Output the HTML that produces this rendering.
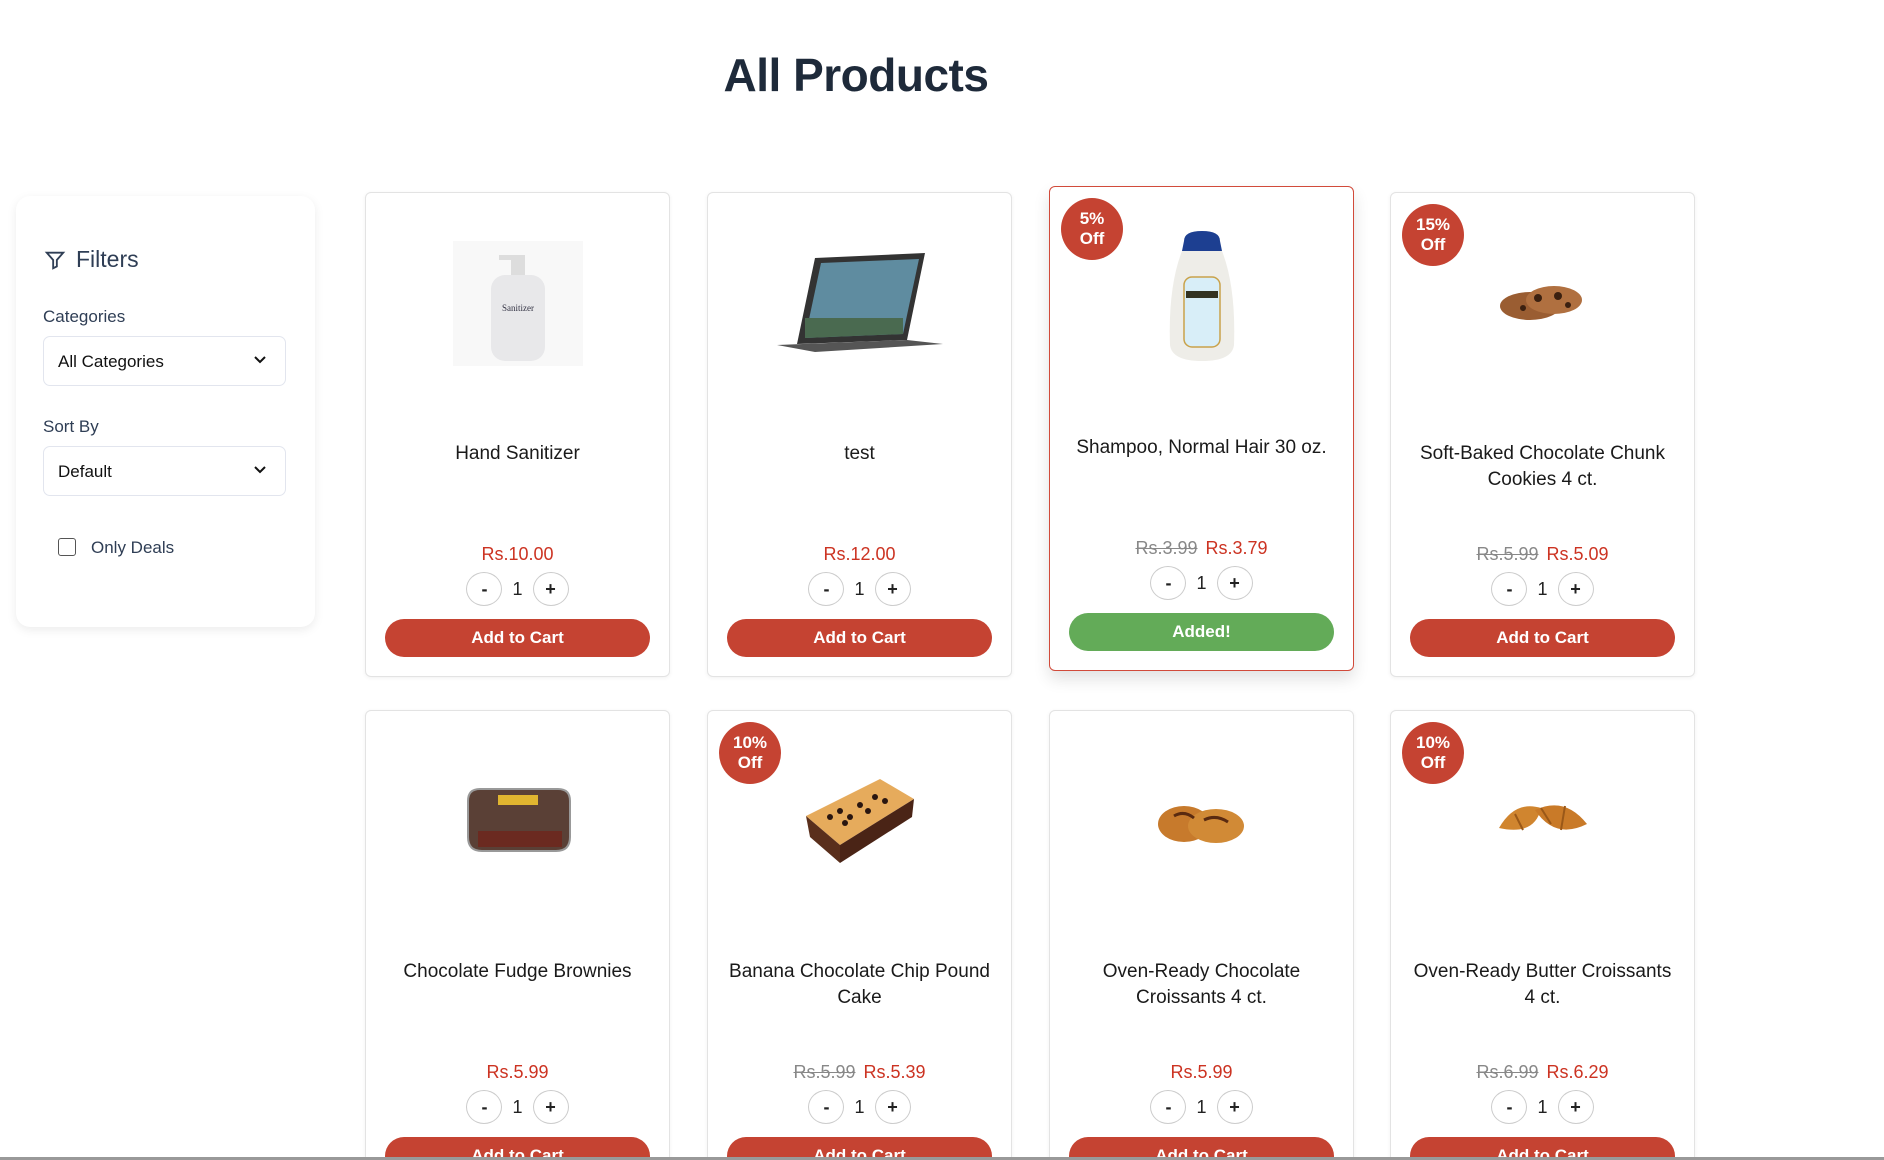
<!DOCTYPE html>
<html style="height:1160px;overflow:hidden"><head><meta charset="utf-8"><style>
*{box-sizing:border-box;margin:0;padding:0}
body{width:1884px;height:1160px;background:#fff;font-family:"Liberation Sans",sans-serif;position:relative;overflow:hidden;color:#222}
.wrap{position:absolute;left:0;top:0;width:1884px;height:1157px;overflow:hidden}
h1{position:absolute;left:0;width:1712px;text-align:center;top:48px;font-size:46px;font-weight:bold;color:#1e2a3a;letter-spacing:-0.5px}
.side{position:absolute;left:16px;top:196px;width:299px;height:431px;background:#fff;border-radius:14px;box-shadow:0 3px 10px rgba(0,0,0,.08)}
.side .fh{position:absolute;left:28px;top:50px;font-size:23px;color:#2f3e55;display:flex;align-items:center;gap:10px}
.lbl{position:absolute;left:27px;font-size:17px;color:#2f3e55}
.sel{position:absolute;left:27px;width:243px;height:50px;border:1px solid #e2e5ee;border-radius:7px;font-size:17px;color:#111;padding:15px 14px}
.sel svg{position:absolute;right:18px;top:18px}
.chk{position:absolute;left:42px;top:342px;width:18px;height:18px;border:1.5px solid #555;border-radius:3px}
.od{position:absolute;left:75px;top:342px;font-size:17px;color:#2f3e55}
.card{position:absolute;width:305px;height:485px;border:1px solid #e3e3e3;border-radius:6px;background:#fff;box-shadow:0 1px 4px rgba(0,0,0,.06)}
.card.hl{border-color:#d14a3a;box-shadow:0 8px 16px rgba(0,0,0,.12)}
.img{position:absolute;left:0;right:0;top:40px;height:140px;display:flex;justify-content:center;align-items:center}
.t{position:absolute;left:20px;right:20px;top:248px;text-align:center;font-size:19px;line-height:26px;color:#1a1a1a}
.p{position:absolute;left:0;right:0;top:351px;text-align:center;font-size:18px;color:#cc3322}
.p s{color:#888;margin-right:8px}
.q{position:absolute;left:0;right:0;top:379px;display:flex;justify-content:center;align-items:center;gap:10px;font-size:18px;color:#222}
.q span.b{width:36px;height:34px;border:1px solid #ccc;border-radius:50%;display:flex;justify-content:center;align-items:center;font-weight:bold;font-size:18px}
.btn{position:absolute;left:19px;right:19px;top:426px;height:38px;border-radius:19px;background:#c54332;color:#fff;font-weight:bold;font-size:17px;text-align:center;line-height:38px}
.btn.g{background:#63ab58}
.bd{position:absolute;left:11px;top:11px;width:62px;height:62px;border-radius:50%;background:#c54332;color:#fff;font-weight:bold;font-size:17px;line-height:20px;text-align:center;padding-top:11px}
.line{position:absolute;left:0;width:1884px;top:1157px;height:3px;background:#999}
</style></head><body>
<div class="wrap">
<h1>All Products</h1>
<div class="side">
 <div class="fh"><svg width="22" height="22" viewBox="0 0 24 24" fill="none" stroke="#2f3e55" stroke-width="2"><path d="M3 4h18l-7 8v7l-4 2v-9z"/></svg>Filters</div>
 <div class="lbl" style="top:111px">Categories</div>
 <div class="sel" style="top:140px">All Categories<svg width="14" height="10" viewBox="0 0 14 10"><path d="M2 2l5 5 5-5" stroke="#111" stroke-width="2" fill="none"/></svg></div>
 <div class="lbl" style="top:221px">Sort By</div>
 <div class="sel" style="top:250px">Default<svg width="14" height="10" viewBox="0 0 14 10"><path d="M2 2l5 5 5-5" stroke="#111" stroke-width="2" fill="none"/></svg></div>
 <div class="chk"></div><div class="od">Only Deals</div>
</div>

<div class="card" style="left:365px;top:192px">
 <div class="img"><svg width="130" height="125" viewBox="0 0 130 125"><rect x="0" y="0" width="130" height="125" fill="#f8f8f8"/><rect x="58" y="14" width="14" height="20" fill="#ddd"/><rect x="46" y="14" width="20" height="5" fill="#ddd"/><rect x="38" y="34" width="54" height="86" rx="14" fill="#e8e8ea"/><text x="65" y="70" font-size="9" fill="#334" text-anchor="middle" font-family="Liberation Serif">Sanitizer</text></svg></div>
 <div class="t">Hand Sanitizer</div><div class="p">Rs.10.00</div>
 <div class="q"><span class="b">-</span>1<span class="b">+</span></div><div class="btn">Add to Cart</div>
</div>
<div class="card" style="left:707px;top:192px">
 <div class="img"><svg width="170" height="110" viewBox="0 0 170 110"><path d="M40 10L150 5L132 92L22 96z" fill="#333"/><path d="M46 15L144 11L128 86L30 90z" fill="#5f8ca0"/><path d="M30 70L128 70 128 86 30 90z" fill="#4a6a50"/><path d="M2 97L132 92L168 96L40 104z" fill="#555"/></svg></div>
 <div class="t">test</div><div class="p">Rs.12.00</div>
 <div class="q"><span class="b">-</span>1<span class="b">+</span></div><div class="btn">Add to Cart</div>
</div>
<div class="card hl" style="left:1049px;top:186px">
 <div class="bd">5%<br>Off</div>
 <div class="img"><svg width="80" height="140" viewBox="0 0 80 140"><path d="M22 14Q22 4 40 4Q58 4 58 14L60 24H20z" fill="#1d3f91"/><path d="M20 24H60Q74 60 72 118Q70 134 40 134Q10 134 8 118Q6 60 20 24z" fill="#eeede8"/><rect x="22" y="50" width="36" height="70" rx="8" fill="#d8eef8" stroke="#c9a24a" stroke-width="1.5"/><rect x="24" y="64" width="32" height="7" fill="#332"/></svg></div>
 <div class="t">Shampoo, Normal Hair 30 oz.</div><div class="p"><s>Rs.3.99</s>Rs.3.79</div>
 <div class="q"><span class="b">-</span>1<span class="b">+</span></div><div class="btn g">Added!</div>
</div>
<div class="card" style="left:1390px;top:192px">
 <div class="bd">15%<br>Off</div>
 <div class="img"><svg width="90" height="50" viewBox="0 0 90 50"><ellipse cx="32" cy="28" rx="30" ry="14" fill="#9a5d32"/><ellipse cx="56" cy="22" rx="28" ry="14" fill="#b07040"/><circle cx="40" cy="20" r="4" fill="#3b2010"/><circle cx="60" cy="18" r="4" fill="#3b2010"/><circle cx="25" cy="30" r="3" fill="#3b2010"/><circle cx="70" cy="27" r="3" fill="#3b2010"/></svg></div>
 <div class="t">Soft-Baked Chocolate Chunk Cookies 4 ct.</div><div class="p"><s>Rs.5.99</s>Rs.5.09</div>
 <div class="q"><span class="b">-</span>1<span class="b">+</span></div><div class="btn">Add to Cart</div>
</div>

<div class="card" style="left:365px;top:710px">
 <div class="img"><svg width="120" height="80" viewBox="0 0 120 80"><path d="M10 20Q10 8 22 8H100Q112 8 112 20V56Q112 70 98 70H24Q10 70 10 56z" fill="#5a4036" stroke="#999" stroke-width="2"/><rect x="20" y="50" width="84" height="16" fill="#6b2a20"/><rect x="40" y="14" width="40" height="10" fill="#e0b530"/></svg></div>
 <div class="t">Chocolate Fudge Brownies</div><div class="p">Rs.5.99</div>
 <div class="q"><span class="b">-</span>1<span class="b">+</span></div><div class="btn">Add to Cart</div>
</div>
<div class="card" style="left:707px;top:710px">
 <div class="bd">10%<br>Off</div>
 <div class="img"><svg width="120" height="100" viewBox="0 0 120 100"><path d="M6 45L80 8L114 28L40 74z" fill="#e6ab5c"/><path d="M6 45L40 74L40 92L10 66z" fill="#5a2f1c"/><path d="M40 74L114 28L112 46L40 92z" fill="#4a2416"/><g fill="#2a1610"><circle cx="40" cy="40" r="3"/><circle cx="50" cy="46" r="3"/><circle cx="60" cy="34" r="3"/><circle cx="75" cy="26" r="3"/><circle cx="85" cy="30" r="3"/><circle cx="45" cy="52" r="3"/><circle cx="68" cy="40" r="3"/><circle cx="30" cy="46" r="3"/></g></svg></div>
 <div class="t">Banana Chocolate Chip Pound Cake</div><div class="p"><s>Rs.5.99</s>Rs.5.39</div>
 <div class="q"><span class="b">-</span>1<span class="b">+</span></div><div class="btn">Add to Cart</div>
</div>
<div class="card" style="left:1049px;top:710px">
 <div class="img"><svg width="95" height="55" viewBox="0 0 95 55"><ellipse cx="30" cy="30" rx="26" ry="18" fill="#c77a2c"/><ellipse cx="62" cy="32" rx="28" ry="17" fill="#d18a36"/><path d="M20 22Q30 16 40 24M50 26Q62 20 74 28" stroke="#5a2a10" stroke-width="3" fill="none"/></svg></div>
 <div class="t">Oven-Ready Chocolate Croissants 4 ct.</div><div class="p">Rs.5.99</div>
 <div class="q"><span class="b">-</span>1<span class="b">+</span></div><div class="btn">Add to Cart</div>
</div>
<div class="card" style="left:1390px;top:710px">
 <div class="bd">10%<br>Off</div>
 <div class="img"><svg width="95" height="55" viewBox="0 0 95 55"><path d="M4 34Q20 6 46 14Q40 42 4 34z" fill="#d0852f"/><path d="M40 16Q70 2 92 30Q60 46 40 16z" fill="#c97a28"/><path d="M20 20L28 36M46 14L56 30M70 12L66 36" stroke="#9a5818" stroke-width="2"/></svg></div>
 <div class="t">Oven-Ready Butter Croissants 4 ct.</div><div class="p"><s>Rs.6.99</s>Rs.6.29</div>
 <div class="q"><span class="b">-</span>1<span class="b">+</span></div><div class="btn">Add to Cart</div>
</div>
</div>
<div class="line"></div>
</body></html>
